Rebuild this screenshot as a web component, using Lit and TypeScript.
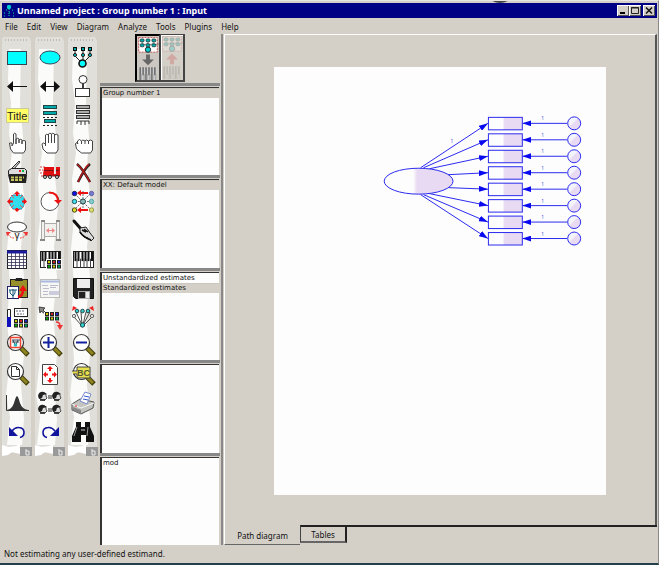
import { LitElement, html, css, svg } from "lit";
import { customElement, state } from "lit/decorators.js";

const hexes = (xs: number[], y: number) =>
  xs.map((x) => svg`<rect x=${x} y=${y} width="3" height="3" fill="#0aa" stroke="#111"/>`);
const dots = (x: number, y: number) =>
  ["#cc0", "#c22", "#22c", "#0a0", "#cc0", "#0a6"].map(
    (c, i) => svg`<rect x=${x + (i % 3) * 5} y=${y + Math.floor(i / 3) * 4.5} width="3" height="3" fill=${c} stroke="#222"/>`
  );
const lens = (inner: unknown) => svg`
  <path d="M19 17l7 7" stroke="#443f08" stroke-width="5"/>
  <path d="M19 17l6 6" stroke="#8d8420" stroke-width="3"/>
  <circle cx="13.5" cy="11.5" r="8" fill="#fff" stroke="#333" stroke-width="1.2"/>${inner}`;
const keys = (y: number, h: number) => svg`
  <rect x="5.5" y=${y} width="20" height=${h} fill="#fff" stroke="#222"/>
  ${[7.5, 10.5, 14.5, 17.5, 20.5, 24].map((x) => svg`<path d="M${x} ${y}v${h * 0.6}" stroke="#111" stroke-width="2"/>`)}
  ${[9, 12.5, 16, 19, 22.5].map((x) => svg`<path d="M${x} ${y + h * 0.45}v${h * 0.55}" stroke="#444"/>`)}`;
const face = (x: number, y: number) => svg`
  <path d=${`M${x + 2} ${y + 3}q2-3 4-2 3 1 2 3l1 2-2 2h-3l-2-1z`} fill="#ddd" stroke="#222" stroke-width=".8"/>
  <path d=${`M${x} ${y + 4}q1-5 6-4l3 2-4 1-1 3-3 1z`} fill="#222"/>
  <path d=${`M${x + 2} ${y + 8}h5`} stroke="#222" stroke-width="1.5"/>`;

const icons: Record<string, unknown> = {
  "Draw observed variable": svg`<rect x="5.5" y="8.5" width="19" height="13" fill="#0ff" stroke="#345"/>`,
  "Draw unobserved variable": svg`<ellipse cx="15" cy="14.5" rx="10" ry="6.5" fill="#0ff" stroke="#345"/>`,
  "Draw latent variable": svg`<path d="M7 6v7l7 7M15 6v14M22 6v7l-7 7" fill="none" stroke="#222"/>
    ${hexes([5.5, 13.5, 20.5], 4.5)}${[7, 15, 22].map((x) => svg`<circle cx=${x} cy="12" r="1.6" fill="#0aa" stroke="#222"/>`)}
    <circle cx="14.5" cy="20.5" r="3.5" fill="#0ff" stroke="#111" stroke-width="1.6"/>`,
  "Draw path": svg`<path d="M8 14.5h17" stroke="#111"/><path d="M5 14.5l6-5.5v11z" fill="#111"/>`,
  "Draw covariance": svg`<path d="M8 14.5h14" stroke="#111"/><path d="M5 14.5l6-5.5v11zM25 14.5l-6-5.5v11z" fill="#111"/>`,
  "Add unique variable": svg`<circle cx="15" cy="7.5" r="4" fill="#fff" stroke="#333"/><path d="M15 11.5v6" stroke="#111" stroke-width="1.6"/><rect x="7.5" y="16.5" width="14" height="8" fill="#fff" stroke="#333"/>`,
  "Figure caption": svg`<rect x="4.5" y="7.5" width="22" height="14" fill="#ff6" stroke="#cc9"/><text x="5" y="19" font-size="11" font-family="Liberation Sans, sans-serif" fill="#222">Title</text>`,
  "List variables in model": svg`${[4, 10].map((y) => svg`<rect x="8.5" y=${y + 0.5} width="13" height="3" fill="#0aa" stroke="#244"/>`)}<path d="M8 16.5h14M8 24.5h14" stroke="#222" stroke-dasharray="2 2"/><rect x="9.5" y="18.5" width="11" height="3" fill="#0aa" stroke="#244"/>`,
  "List variables in data set": svg`${[4, 9, 14].map((y) => svg`<rect x="8.5" y=${y + 0.5} width="13" height="3" fill="#aaa" stroke="#333"/>`)}<path d="M9 23v-3h12v3M13 20v4M17 20v4" fill="none" stroke="#333"/>`,
  "Select one object": svg`<path d="M11.5 14V5q1-1.500 2.500 0v10V10q2-1.500 3 0v4V11q2-1.500 3 0v4V12q2-1 3.500 0v9l-2 3h-10l-3-4-1-6h2.500v3z" fill="#fff" stroke="#444"/>`,
  "Select all objects": svg`<path d="M10.5 14V6q1-1.500 3 0v8V5q1-1.500 3 0v9V5q1-1.500 3 0v9V6q2-1.500 3.500 0v15l-2 3h-9l-4-4-1-5q1-2 3.500 0v2z" fill="#fff" stroke="#444"/>`,
  "Deselect all objects": svg`<path d="M9.5 15v-3q2-3 4 0 1-2 3.500 0 1-2 3.500 0 2-2 4 0v9l-2 3h-9l-5-4-1-5q0-2 2.500-1zM13.500 12v3M17 12v3M20.500 12v3" fill="#fff" stroke="#444"/>`,
  "Duplicate objects": svg`<path d="M9 11l8-8 1 1-6 7" fill="#ccc" stroke="#333"/><path d="M6.500 12.500l3-2h13l2 2v4h-18z" fill="#ddd" stroke="#222"/><path d="M6 17h19l-1 8H8z" fill="#222"/><path d="M9 19.500h13M9 22h12" stroke="#c6c65a" stroke-width="2" stroke-dasharray="3 1"/><path d="M17 13h2" stroke="#e22" stroke-width="2"/><path d="M20 13h2" stroke="#0b4" stroke-width="2"/>`,
  "Move objects": svg`<path d="M5 9h5M4 12h4M5 15h5M6 18h3" stroke="#c44" stroke-dasharray="2 1"/><path d="M9 9h10v7h2V9h4v9H8z" fill="#e01010"/><path d="M9 12.500h9M21 12.500h3M8 18h17" stroke="#711"/>${[10, 15, 22].map((x) => svg`<circle cx=${x} cy="19" r="1.500" fill="#ddd" stroke="#222"/>`)}`,
  "Erase objects": svg`<path d="M9 6q5 4 13 18M22 6q-5 4-12 18" fill="none" stroke="#222" stroke-width="2.500"/><path d="M9 6q5 4 13 18M21 6q-5 4-11 18" fill="none" stroke="#b11c1c" stroke-width="1.600"/>`,
  "Change shape": svg`<path d="M11 8h9l2 3v7l-2 4h-9l-3-4v-7z" fill="#3de" stroke="#479" stroke-dasharray="3 1"/><path d="M15 6v3M15 21v3M8 14.500h3M20 14.500h3" stroke="#e11" stroke-width="2"/>${["M15 4l3 3h-6z", "M15 25l3-3h-6z", "M5 14.500l3-3v6z", "M25 14.500l-3-3v6z"].map((d) => svg`<path d=${d} fill="#e11"/>`)}<path d="M9 8l3 3M21 8l-3 3M9 21l3-3M21 21l-3-3" stroke="#e55"/>`,
  "Rotate indicators": svg`<circle cx="15" cy="14.500" r="9" fill="#fff" stroke="#555"/><path d="M14 5.500q9 0 9 9" fill="none" stroke="#e11" stroke-width="2"/><path d="M19 13h8l-4 4z" fill="#e11"/>`,
  "Reflect indicators": svg`<path d="M15 4v21M7 7l15 15M22 7L7 22M7 14.500h16" stroke="#777" stroke-dasharray="2 1"/><path d="M12 6h8M12 23h8" stroke="#e11" stroke-width="2"/><path d="M9 6l4-3v6zM9 23l4-3v6z" fill="#e11"/>
    <circle cx="6.500" cy="6.500" r="2.200" fill="#11e" stroke="#225"/><circle cx="6.500" cy="14.500" r="2.200" fill="#4de" stroke="#255"/><circle cx="6.500" cy="23" r="2.200" fill="#dd2" stroke="#442"/><circle cx="23.500" cy="6.500" r="2.200" fill="#77c" stroke="#66a"/><circle cx="23.500" cy="14.500" r="2.200" fill="#8cc" stroke="#5aa"/><circle cx="23.500" cy="23" r="2.200" fill="#dd7" stroke="#994"/><circle cx="15" cy="14.500" r="2.500" fill="#8bb" stroke="#244"/>`,
  "Move parameter values": svg`<ellipse cx="15" cy="11" rx="9.500" ry="5" fill="#fff" stroke="#333"/><text x="12.500" y="23" font-size="10" font-family="Liberation Sans, sans-serif" fill="#222">γ</text><path d="M6 18q2 4 6 4M24 18q-2 4-6 4" fill="none" stroke="#e33" stroke-dasharray="2 1"/><path d="M4 16h5l-4 4zM26 16h-5l4 4z" fill="#e33"/>`,
  "Reposition diagram": svg`<path d="M6.500 5.500h3v18h-3zM21.500 5.500h3v18h-3zM9.500 7.500h12v13h-12z" fill="#f3f1ee" stroke="#aaa"/><path d="M5 24h5M21 24h5M6 5h4M21 5h4" stroke="#888" stroke-width="2"/><path d="M13 14.500h5" stroke="#e88"/><path d="M11 14.500l3-2.500v5zM20 14.500l-3-2.500v5z" fill="#e88"/>`,
  "Touch up a variable": svg`<path d="M6 5l7 8" stroke="#111" stroke-width="3" stroke-linecap="round"/><path d="M12 12l6-1 4 6 4 5-3 3-3-3-4-1-4-4z" fill="#ddd" stroke="#222"/><path d="M12 16q3 5 11 8M14 14l4 2M16 13l4 3" fill="none" stroke="#111" stroke-width="1.500"/>`,
  "Select data files": svg`<rect x="5.500" y="5.500" width="19" height="18" fill="#fff" stroke="#222"/><path d="M5 7h20" stroke="#1a1aa0" stroke-width="3"/><path d="M5 11.500h20M5 14.500h20M5 17.500h20M5 20.500h20M9.500 8v16M13.500 8v16M17.500 8v16M21.500 8v16" stroke="#335" stroke-width=".8"/>`,
  "Analysis properties": svg`${keys(6.5, 16)}<rect x="11" y="14" width="16" height="11" fill="#fff"/>${dots(12.5, 15.5)}`,
  "Calculate estimates": keys(6.5, 16),
  "Copy to clipboard": svg`<rect x="8.500" y="5.500" width="17" height="18" fill="#98912b" stroke="#222"/><path d="M13 7l1-3h6l1 3z" fill="#222"/><rect x="5.500" y="12.500" width="11" height="12" fill="#fff" stroke="#226"/><path d="M7 16h8M8 16v3l3 3M13 16v3l-2 3M11 15v9" fill="none" stroke="#157"/><path d="M16 23q5-1 5-7" fill="none" stroke="#e11" stroke-width="2.500"/><path d="M17 17l4-6 4 6z" fill="#e11"/>`,
  "View text output": svg`<rect x="5.500" y="5.500" width="19" height="18" fill="#f6f6f4" stroke="#bbb"/><path d="M6 7.500h18" stroke="#aab8dd" stroke-width="2"/><path d="M7 11.500h6M8 14.500h6M8 17.500h5M8 20.500h5M15 11.500h8M15 13.500h6" stroke="#bbc"/><path d="M14 17h10v4H14z" fill="#ccd"/>`,
  "Save diagram": svg`<path d="M5.500 4.500h20v20h-18l-2-2z" fill="#222" stroke="#111"/><rect x="9" y="5" width="13" height="9" fill="#eee"/><path d="M10 17h12v8H10z" fill="#aaa"/><path d="M11 18h6v6h-6z" fill="#222"/><path d="M18 18h3v6h-3z" fill="#eee"/>`,
  "Object properties": svg`<path d="M5.500 6.500h3v17h-3z" fill="#fff" stroke="#222"/><path d="M5 14h4v10H5z" fill="#11b"/><rect x="12.500" y="5.500" width="13" height="8" fill="#fff" stroke="#222"/><path d="M14 8h9M15 11h7" stroke="#667" stroke-dasharray="2 1"/><rect x="11" y="15" width="15" height="9" fill="#fff"/>${dots(12.5, 16.5)}`,
  "Drag properties": svg`<path d="M4 4l6 1-2 2 3 3-1 1-4-3-1 2z" fill="#888" stroke="#444"/><path d="M9 9h15v9H9z" fill="#fff"/>${dots(10.5, 9.5)}<path d="M21 19q4 0 4 4" fill="none" stroke="#e33" stroke-width="1.500"/><path d="M22 22h6l-3 5z" fill="#e33"/>`,
  "Preserve symmetries": svg`<path d="M8 9l6 13M13 9l1 13M18 9l-3 13M22 9l-7 13M6 14l8 9M24 14l-9 9" stroke="#222" stroke-width=".8"/>${[9, 14.5, 20].map((x) => svg`<circle cx=${x} cy="8" r="1.800" fill="#3cc" stroke="#244"/>`)}${[6, 24].map((x) => svg`<circle cx=${x} cy="13" r="1.700" fill="#ddd" stroke="#666"/>`)}<circle cx="14.500" cy="22" r="2.200" fill="#3cc" stroke="#244"/><path d="M4 8l1-5 4 2zM26 8l-1-5-4 2z" fill="#e22"/>`,
  "Zoom selected area": lens(svg`<rect x="8.500" y="6.500" width="10" height="10" fill="#fff" stroke="#e43" stroke-width="1.500"/><path d="M10 9h8M10 11h7M11 9l2 5M16 9l-2 5" stroke="#345"/><circle cx="13.500" cy="14" r="1.800" fill="#3bb"/>`),
  "Zoom in": lens(svg`<path d="M13.500 6v11M8 11.500h11" stroke="#11209c" stroke-width="2"/>`),
  "Zoom out": lens(svg`<path d="M8 11.500h11" stroke="#11209c" stroke-width="2"/>`),
  "Zoom page": lens(svg`<path d="M9.500 6.500h5l3 3v7h-8z" fill="#fff" stroke="#333"/><path d="M14.500 6.500v3h3" fill="none" stroke="#333"/>`),
  "Fit to page": svg`<path d="M7.500 4.500h12l3 3v17h-15z" fill="#fff" stroke="#444"/>${["M15 6l3 3h-2v2h-2v-2h-2z", "M15 23l3-3h-2v-2h-2v2h-2z", "M8 14.500l3-3v2h2v2h-2v2z", "M22 14.500l-3-3v2h-2v2h2v2z"].map((d) => svg`<path d=${d} fill="#e11"/>`)}`,
  "Loupe": svg`${lens("")}<path d="M4 11h5V7h13v11H9v-4H5" fill="#e6e04e" stroke="#444"/><text x="9" y="16" font-size="9" font-weight="bold" font-family="Liberation Sans, sans-serif" fill="#553">BC</text>`,
  "Bayesian": svg`<path d="M4.500 6v15.500H27" fill="none" stroke="#333"/><path d="M5 21q5-1 7-7 2-7 3-7t3 7q2 6 8 7z" fill="#333"/>`,
  "Multiple-group analysis": svg`${face(3, 3)}${face(17, 3)}${face(3, 16)}${face(17, 16)}<path d="M13 7h4M13 9h4M13 20h4M13 22h4" stroke="#222"/>`,
  "Print path diagrams": svg`<path d="M4 15l8-5 14 3-1 6-12 6-9-4z" fill="#c4c4c0" stroke="#555"/><path d="M4 15l9 4 13-5" fill="none" stroke="#f6f6f6"/><path d="M12 12l5-9 6 2-4 10z" fill="#fff" stroke="#78c"/><path d="M16 7l5 1M15 10l5 1" stroke="#35c"/><path d="M5 18l8 3v4l-8-4z" fill="#888"/><path d="M7 17h2" stroke="#e22"/>`,
  "Undo": svg`<path d="M10 13q3-4 7-3.500 5 .5 5 5 0 4-4 5" fill="none" stroke="#11149c" stroke-width="1.600"/><path d="M7 9v9h9z" fill="#11149c"/>`,
  "Redo": svg`<path d="M20 13q-3-4-7-3.500-5 .5-5 5 0 4 4 5" fill="none" stroke="#11149c" stroke-width="1.600"/><path d="M24 9v9h-9z" fill="#11149c"/>`,
  "Search": svg`<path d="M8 4h5v5h4V4h5v5l4 9v6h-8v-7h-5v7H4v-6l4-9z" fill="#111"/><path d="M9 9l-3 9M20 9l-1 9" stroke="#999"/><path d="M13 12h4" stroke="#ccc"/>`,
};

const diagramIcon = (arrow: unknown) => svg`
  <rect x="1.500" y="1.500" width="19" height="15" fill="#fff" stroke="#b55" stroke-dasharray="2 1"/>
  ${[5, 11, 17].map((x) => svg`<path d="M${x} 5v4l6-1" fill="none" stroke="#222" stroke-width=".5"/><rect x=${x - 2} y="3" width="4" height="3" rx="1" fill="#0aa" stroke="#222" stroke-width=".7"/><rect x=${x - 2} y="8" width="4" height="3" rx="1" fill="#0aa" stroke="#222" stroke-width=".7"/>`)}
  <circle cx="11" cy="14" r="2.700" fill="#0cc" stroke="#222"/>${arrow}
  <rect x="2" y="32" width="18" height="13" fill="#ccc"/>
  ${[3, 6, 9, 12, 15, 18].map((x, i) => svg`<path d="M${x} 32v${i % 2 ? 8 : 13}" stroke="#666" stroke-width="1.500"/><path d="M${x + 1} 39v6" stroke="#999"/>`)}`;

@customElement("app-root")
class AppRoot extends LitElement {
  @state() private tab = 0;

  static styles = css`
    :host { display: flex; flex-direction: column; min-height: 100vh; box-sizing: border-box; position: relative; overflow: hidden;
      font: 8px/10px "Noto Sans", sans-serif; color: #111; background: #d4d0c8;
      border: solid; border-width: 1px 1px 2px 0; border-color: #e8e6e2 #888 #24404a #d4d0c8; }
    button { font: inherit; color: inherit; background: none; border: 0; padding: 0; margin: 0; }
    svg { display: block; }
    .blob { position: absolute; left: 490px; top: -10px; width: 20px; height: 12px; border-radius: 50%; background: #444; }
    .title { display: flex; align-items: center; height: 15px; margin: 2px 1px 0 2px; background: #000084; color: #fff; }
    .title h1 { flex: 1; margin: 0 0 0 1px; font: bold 9px/15px "Noto Sans", sans-serif; }
    .caption { width: 12px; height: 11px; background: #d4d0c8; box-shadow: inset 1px 1px #fff, inset -1px -1px #555; }
    .close { margin: 0 2px; }
    .menu { display: flex; gap: 9px; height: 16px; padding: 0 5px; line-height: 18px; }
    .body { flex: 1; display: grid; grid-template-columns: 100px 120px 4px 1fr; min-height: 0; }
    .tools { display: grid; grid-template-columns: repeat(3, 33px); padding-top: 3px; align-content: start; }
    .strip { position: relative; }
    .paper-strip { position: absolute; inset: 0 1px 0 1px; width: 31px; height: 100%; }
    .rows { position: relative; display: grid; grid-template-rows: repeat(14, 1fr); height: 404px; justify-items: center; margin: 6px 0 10px; }
    .rows button { width: 29px; min-height: 0; display: grid; align-content: center; }
    .rows svg { width: 29px; height: 29px; margin: -1px 0; overflow: visible; }
    .panels { display: grid; grid-template-rows: 49px repeat(5, minmax(0, 1fr)); }
    .modes { display: flex; justify-content: center; }
    .modes button { width: 25px; height: 48px; border: 1px solid #444; border-width: 1px 2px 2px 1px; box-shadow: inset 1px 1px #fff; }
    .modes .on { border-color: #000 #444 #444 #000; border-width: 2px 1px 2px 2px; background: #ccc8c1; box-shadow: none; }
    .modes svg { width: 22px; height: 45px; }
    .modes .off svg { opacity: .25; }
    .list { border-top: 3px solid #888; display: flex; }
    ul { flex: 1; list-style: none; margin: 1px 1px 0 0; padding: 0; background: #fdfdfd; border: solid #333; border-width: 1px 0 0 2px; }
    li { padding: 0 1px; height: 10px; line-height: 10px; white-space: nowrap; font-family: "DejaVu Sans", sans-serif; font-size: 7px; }
    .sel { background: #d4d0c8; box-shadow: inset 0 1px #c8c8c0; }
    .split { background: #888; width: 2px; justify-self: center; }
    .main { display: flex; flex-direction: column; }
    .canvas { flex: 1; display: flex; justify-content: center; align-items: center; padding-top: 2px; box-sizing: border-box; margin-right: 1px;
      border: solid; border-width: 1px 2px 0 1px; border-color: #fff #555 #222 #fff; }
    .sheet { width: 77%; background: #fdfdfd; }
    .tabs { display: flex; height: 20px; }
    .tabs button { height: 18px; padding-top: 2px; border: solid; border-width: 2px 2px 2px 1px; border-color: #222 #222 #666 #444; width: 47px; white-space: nowrap; }
    .tabs .active { width: 76px; height: 20px; border-width: 0 0 1px 1px; border-color: #666 #666 #666 #fff; }
    .rest { flex: 1; margin-right: 1px; border-top: 2px solid #222; }
    .status { height: 18px; line-height: 18px; padding-left: 4px; }
  `;

  private strip(col: number) {
    const names = Object.keys(icons).filter((_, i) => i % 3 === col);
    const s = col * 3;
    return html`<div class="strip">
      <svg class="paper-strip" viewBox="0 0 31 420" preserveAspectRatio="none" aria-hidden="true">
        <path d="M2 0h26l2 4v412H1V3z" fill="#e1dfda"/>
        <path d=${`M${8 - (s % 4)} 12l-1 30 3 24-2 30 3 20-4 26 2 40-3 30 3 34-3 36 3 40-4 36 4 22-3 28H21l2-26-3-34 3-30-4-40 4-38-3-30 4-40-4-40 2-30-3-34 1-54z`} fill="#fbfbfa"/>
        <path d="M1 408l7 2 7-1 4-2v10l-8-2-4 3-6 1z" fill="#fff"/>
        <path d="M4 3h24" stroke="#999" stroke-dasharray="1 2"/>
        <rect x="19" y="410" width="12" height="9" fill="#999"/>
        <path d="M25 412v6h3v-4h-3" fill="none" stroke="#eee"/>
      </svg>
      <div class="rows">${names.map((n) => html`<button aria-label=${n}><svg viewBox="0 0 29 29" fill="none">${icons[n]}</svg></button>`)}</div>
    </div>`;
  }

  private list(label: string, items: string[], sel: number) {
    return html`<div class="list"><ul aria-label=${label}>${items.map((t, i) => html`<li class=${i === sel ? "sel" : ""}>${t}</li>`)}</ul></div>`;
  }

  private diagram() {
    const ys = [123.5, 140, 156.5, 173, 189.5, 206, 222.5, 239];
    const starts = [[421, 168], [424, 168], [430, 169], [448, 175], [449, 188], [430, 194], [424, 195], [421, 195]];
    return html`<svg class="sheet" viewBox="274 67 332 429" role="img" aria-label="Path diagram">
      <defs>
        <marker id="tip" viewBox="0 0 9 6" refX="9" refY="3" markerWidth="9" markerHeight="6" orient="auto" markerUnits="userSpaceOnUse"><path d="M0 0l9 3-9 3z" fill="#0a0af0"/></marker>
        <linearGradient id="tint"><stop offset=".42" stop-color="#fdfdfd"/><stop offset=".48" stop-color="#e8daf2"/></linearGradient>
        <linearGradient id="ball" x2="1" y2="1"><stop offset=".4" stop-color="#f4f4fd"/><stop offset=".5" stop-color="#e8daf2"/></linearGradient>
      </defs>
      <g stroke="#2a2af0" fill="url(#tint)">
        ${ys.map((y, i) => svg`
          <path d="M${starts[i][0]} ${starts[i][1]}L488.500 ${y}" marker-end="url(#tip)"/>
          <path d="M568 ${y}H523" marker-end="url(#tip)"/>
          <rect x="489" y=${y - 6} width="34" height="12.500"/>
          <circle cx="575" cy=${y} r="6.500" fill="url(#ball)"/>`)}
        <ellipse cx="419" cy="181.500" rx="34.500" ry="13"/>
      </g>
      <g fill="#4a4ae0" font-size="5">
        <text x="451" y="143">1</text>
        ${ys.map((y) => svg`<text x="542" y=${y - 3}>1</text>`)}
      </g>
    </svg>`;
  }

  render() {
    const tabs = ["Path diagram", "Tables"];
    return html`
      <div class="blob"></div>
      <header class="title">
        <svg width="14" height="14" viewBox="0 0 14 14"><circle cx="7" cy="3" r="2.200" fill="#0cc"/><path d="M7 5v8M2 9h1M2 12h1M7 9h1M11 9h1M11 12h1M4 6h1M10 6h1" stroke="#0a9a9a" stroke-width="1.500" stroke-dasharray="1 1"/></svg>
        <h1>Unnamed project : Group number 1 : Input</h1>
        <button class="caption" aria-label="Minimize"><svg viewBox="0 0 12 11"><path d="M3 8h5" stroke="#000" stroke-width="2"/></svg></button>
        <button class="caption" aria-label="Maximize"><svg viewBox="0 0 12 11"><path d="M2.500 2.500h7v6h-7zM2 3h8" fill="none" stroke="#222"/></svg></button>
        <button class="caption close" aria-label="Close"><svg viewBox="0 0 12 11"><path d="M3 2.500l6 6M9 2.500l-6 6" stroke="#111" stroke-width="1.500"/></svg></button>
      </header>
      <nav class="menu">${["File", "Edit", "View", "Diagram", "Analyze", "Tools", "Plugins", "Help"].map((m) => html`<button>${m}</button>`)}</nav>
      <div class="body">
        <div class="tools">${[0, 1, 2].map((c) => this.strip(c))}</div>
        <div class="panels">
          <div class="modes">
            <button class="on" aria-label="View the input path diagram"><svg viewBox="0 0 22 46">${diagramIcon(svg`<path d="M9 19h4v5h4l-6 6-6-6h4z" fill="#666"/>`)}</svg></button>
            <button class="off" aria-label="View the output path diagram"><svg viewBox="0 0 22 46">${diagramIcon(svg`<path d="M9 30h4v-5h4l-6-6-6 6h4z" fill="#c33"/>`)}</svg></button>
          </div>
          ${this.list("Groups", ["Group number 1"], 0)}
          ${this.list("Models", ["XX: Default model"], 0)}
          ${this.list("Estimates", ["Unstandardized estimates", "Standardized estimates"], 1)}
          ${this.list("Summary", [], -1)}
          ${this.list("Files", ["mod"], -1)}
        </div>
        <div class="split"></div>
        <main class="main">
          <div class="canvas">${this.diagram()}</div>
          <div class="tabs">
            ${tabs.map((t, i) => html`<button class=${i === this.tab ? "active" : ""} @click=${() => (this.tab = i)}>${t}</button>`)}
            <div class="rest"></div>
          </div>
        </main>
      </div>
      <footer class="status">Not estimating any user-defined estimand.</footer>
    `;
  }
}
